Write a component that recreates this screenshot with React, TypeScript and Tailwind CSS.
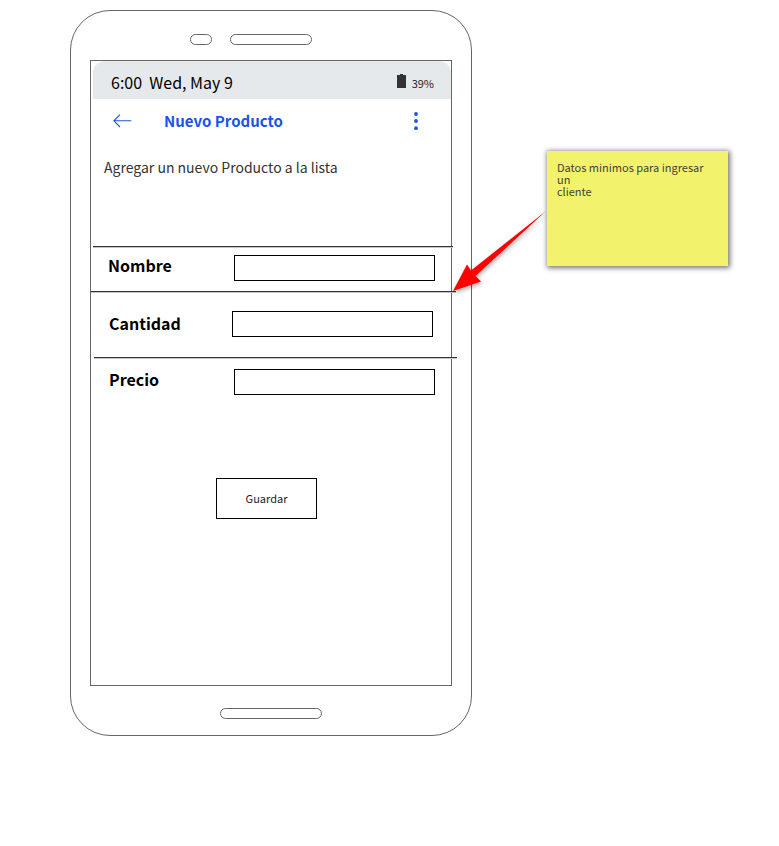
import React from "react";

const Rule = ({ className }: { className: string }) => (
  <div className={`h-[2px] shrink-0 border-t border-[#333333] bg-[#c4c4c4] ${className}`} />
);

const Field = ({ label, className, labelClass, inputClass }: { label: string; className: string; labelClass: string; inputClass: string }) => (
  <label className={`flex shrink-0 items-start ${className}`}>
    <span className={`shrink-0 text-[16px] leading-6 font-bold text-black ${labelClass}`}>{label}</span>
    <input className={`h-[26px] w-[201px] shrink-0 border border-black bg-white ${inputClass}`} />
  </label>
);

const StatusBar = () => (
  <div className="ml-[2px] flex h-[38px] shrink-0 items-center rounded-t-[12px] bg-[#e6e9ec] pr-[17px] pl-[18px]">
    <span className="mt-[3px] whitespace-pre text-[16px] leading-6 text-black">6:00&nbsp; Wed, May 9</span>
    <svg className="mt-px ml-auto" width="9" height="14" viewBox="0 0 9 14" fill="#333333" shapeRendering="crispEdges">
      <path d="M0 1H3V0H6V1H9V14H0Z" />
    </svg>
    <span className="mt-[5px] ml-[6px] text-[11px] leading-4 text-[#222222]">39%</span>
  </div>
);

const TitleBar = () => (
  <div className="flex h-[44px] shrink-0 items-center pr-[33px] pl-[22px] text-[#1a53ec]">
    <svg width="19" height="14" viewBox="0 0 19 14" fill="none" stroke="currentColor" strokeWidth="1.1">
      <path d="M7 .7L.9 6.8L7 13M1 6.8H18.3" />
    </svg>
    <h1 className="ml-[32px] text-[15px] leading-6 font-bold">Nuevo Producto</h1>
    <svg className="ml-auto" width="4" height="20" viewBox="0 0 4 20" fill="currentColor">
      <circle cx="2" cy="3" r="1.9" />
      <circle cx="2" cy="10" r="1.9" />
      <circle cx="2" cy="17.2" r="1.9" />
    </svg>
  </div>
);

export default function App() {
  return (
    <main className="relative flex h-[846px] w-[779px] items-start overflow-hidden bg-white pt-[10px] pl-[70px] font-['Noto_Sans_CJK_SC',sans-serif]">
      <section className="flex h-[726px] w-[402px] shrink-0 flex-col rounded-[40px] border border-[#666666] px-[19px] pt-[23px]">
        <div className="ml-[100px] flex gap-[18px]">
          <div className="h-[11px] w-[22px] rounded-full border border-[#666666]" />
          <div className="h-[11px] w-[82px] rounded-full border border-[#666666]" />
        </div>
        <div className="mt-[15px] flex h-[626px] w-[362px] shrink-0 flex-col border border-[#666666]">
          <StatusBar />
          <TitleBar />
          <p className="mt-[12px] ml-[13px] h-[91px] shrink-0 text-[14px] leading-6 text-[#333333]">Agregar un nuevo Producto a la lista</p>
          <Rule className="ml-[2px] w-[360px]" />
          <Field label="Nombre" className="h-[43px]" labelClass="mt-[5px] ml-[17px] w-[126px]" inputClass="mt-[7px]" />
          <Rule className="w-[365px]" />
          <Field label="Cantidad" className="h-[64px]" labelClass="mt-[18px] ml-[18px] w-[123px]" inputClass="mt-[18px]" />
          <Rule className="ml-[3px] w-[363px]" />
          <Field label="Precio" className="h-[119px]" labelClass="mt-[8px] ml-[18px] w-[125px]" inputClass="mt-[10px]" />
          <button className="ml-[125px] h-[41px] w-[101px] shrink-0 border border-black text-[11px] text-[#222222]">Guardar</button>
        </div>
        <div className="mt-[22px] ml-[130px] h-[11px] w-[102px] shrink-0 rounded-full border border-[#666666]" />
      </section>
      <aside className="mt-[141px] ml-[75px] h-[115px] w-[181px] shrink-0 bg-[#f2f26d] px-[10px] pt-[10px] text-[11px] leading-[12px] text-[#444433] shadow-[1px_1px_5px_1px_rgba(0,0,0,0.55)]">
        Datos minimos para ingresar un<br />cliente
      </aside>
      <svg className="absolute top-[200px] left-[440px] drop-shadow-[1px_2px_2px_rgba(0,0,0,0.35)]" width="110" height="100" viewBox="0 0 110 100">
        <path d="M13 91L27 64.5L31 70.5L106 11L35.5 76L41 81.5Z" fill="#ff0000" />
      </svg>
    </main>
  );
}
